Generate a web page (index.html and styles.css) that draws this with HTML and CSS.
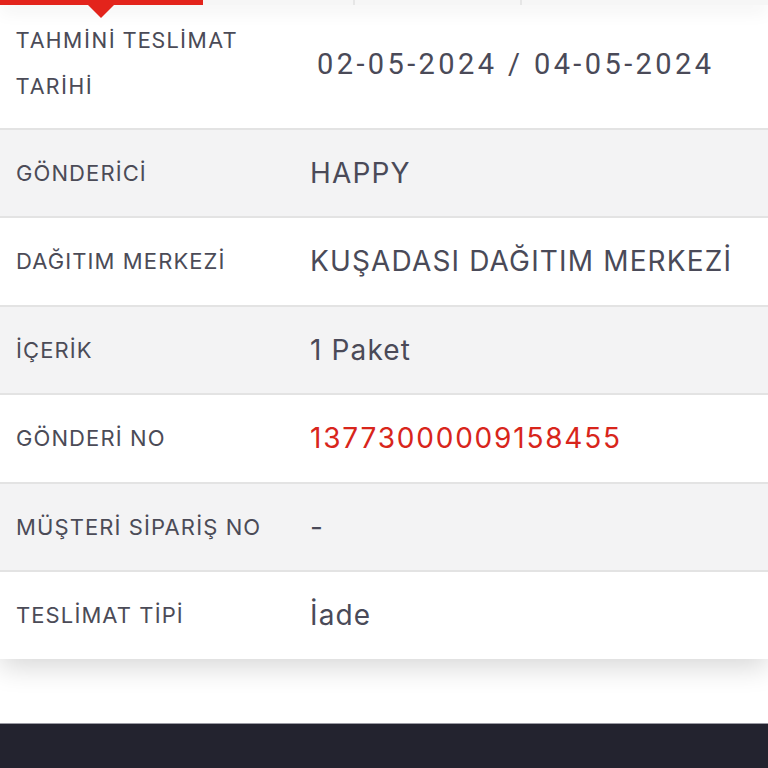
FILE: index.html
```html
<!DOCTYPE html>
<html lang="tr">
<head>
<meta charset="utf-8">
<title>Gönderi Detayı</title>
<link rel="stylesheet" href="styles.css">
</head>
<body>
<div class="page">
  <nav class="tabs">
    <div class="tab tab-active"><span class="tab-arrow"></span></div>
    <div class="tab tab-2"></div>
    <div class="tab tab-3"></div>
    <div class="tab tab-4"></div>
  </nav>
  <section class="card">
    <div class="row row-first">
      <div class="label label-first">TAHMİNİ TESLİMAT<br>TARİHİ</div>
      <div class="value value-date">02-05-2024 / 04-05-2024</div>
    </div>
    <div class="row row-alt">
      <div class="label">GÖNDERİCİ</div>
      <div class="value">HAPPY</div>
    </div>
    <div class="row">
      <div class="label">DAĞITIM MERKEZİ</div>
      <div class="value">KUŞADASI DAĞITIM MERKEZİ</div>
    </div>
    <div class="row row-alt">
      <div class="label">İÇERİK</div>
      <div class="value">1 Paket</div>
    </div>
    <div class="row">
      <div class="label">GÖNDERİ NO</div>
      <div class="value value-red">13773000009158455</div>
    </div>
    <div class="row row-alt">
      <div class="label">MÜŞTERİ SİPARİŞ NO</div>
      <div class="value">-</div>
    </div>
    <div class="row">
      <div class="label">TESLİMAT TİPİ</div>
      <div class="value">İade</div>
    </div>
  </section>
  <div class="spacer"></div>
  <footer class="footer"></footer>
</div>
</body>
</html>
```

FILE: styles.css
```css
* { box-sizing: border-box; }
html, body {
  margin: 0;
  padding: 0;
  background: #ffffff;
  font-family: Inter, "Noto Sans", sans-serif;
  overflow: hidden;
}
.page {
  width: 768px;
  height: 768px;
  display: flex;
  flex-direction: column;
  background: #ffffff;
}
.tabs {
  position: relative;
  z-index: 2;
  height: 5px;
  display: flex;
  background: #f6f6f6;
  box-shadow: 0 4px 18px rgba(0, 0, 0, 0.13);
}
.tab {
  position: relative;
  height: 5px;
}
.tab-active {
  width: 203px;
  background: #e3241c;
}
.tab-arrow {
  position: absolute;
  left: 88px;
  top: 5px;
  width: 0;
  height: 0;
  border-left: 13px solid transparent;
  border-right: 13px solid transparent;
  border-top: 13px solid #e3241c;
}
.tab-2 { width: 152px; border-right: 2px solid #e6e6e6; }
.tab-3 { width: 167px; border-right: 2px solid #e6e6e6; }
.tab-4 { flex: 1; }

.card {
  position: relative;
  z-index: 1;
  background: #ffffff;
  box-shadow: 0 8px 26px rgba(0, 0, 0, 0.16);
}
.row {
  display: flex;
  align-items: center;
  height: 88.5px;
  padding-left: 16px;
  border-top: 2px solid #e3e3e3;
  background: #ffffff;
}
.row-alt { background: #f3f3f4; }
.row-first {
  height: 122.5px;
  border-top: none;
  padding-bottom: 4px;
}
.label {
  width: 294px;
  flex: none;
  font-size: 22px;
  color: #4b4b57;
  letter-spacing: 1.1px;
}
.label-first {
  font-family: Roboto, sans-serif;
  font-size: 22px;
  line-height: 46px;
  letter-spacing: 1.6px;
}
.value {
  font-size: 28px;
  color: #4a4a58;
  letter-spacing: 1.15px;
}
.value-date {
  font-family: Roboto, sans-serif;
  font-size: 29px;
  letter-spacing: 3.4px;
  padding-left: 7px;
}
.value-red { color: #d8251b; letter-spacing: 1.8px; }

.spacer { height: 64px; flex: none; }
.footer {
  flex: 1;
  background: #23232f;
  border-top: 1px solid #9a9aa3;
}
```
